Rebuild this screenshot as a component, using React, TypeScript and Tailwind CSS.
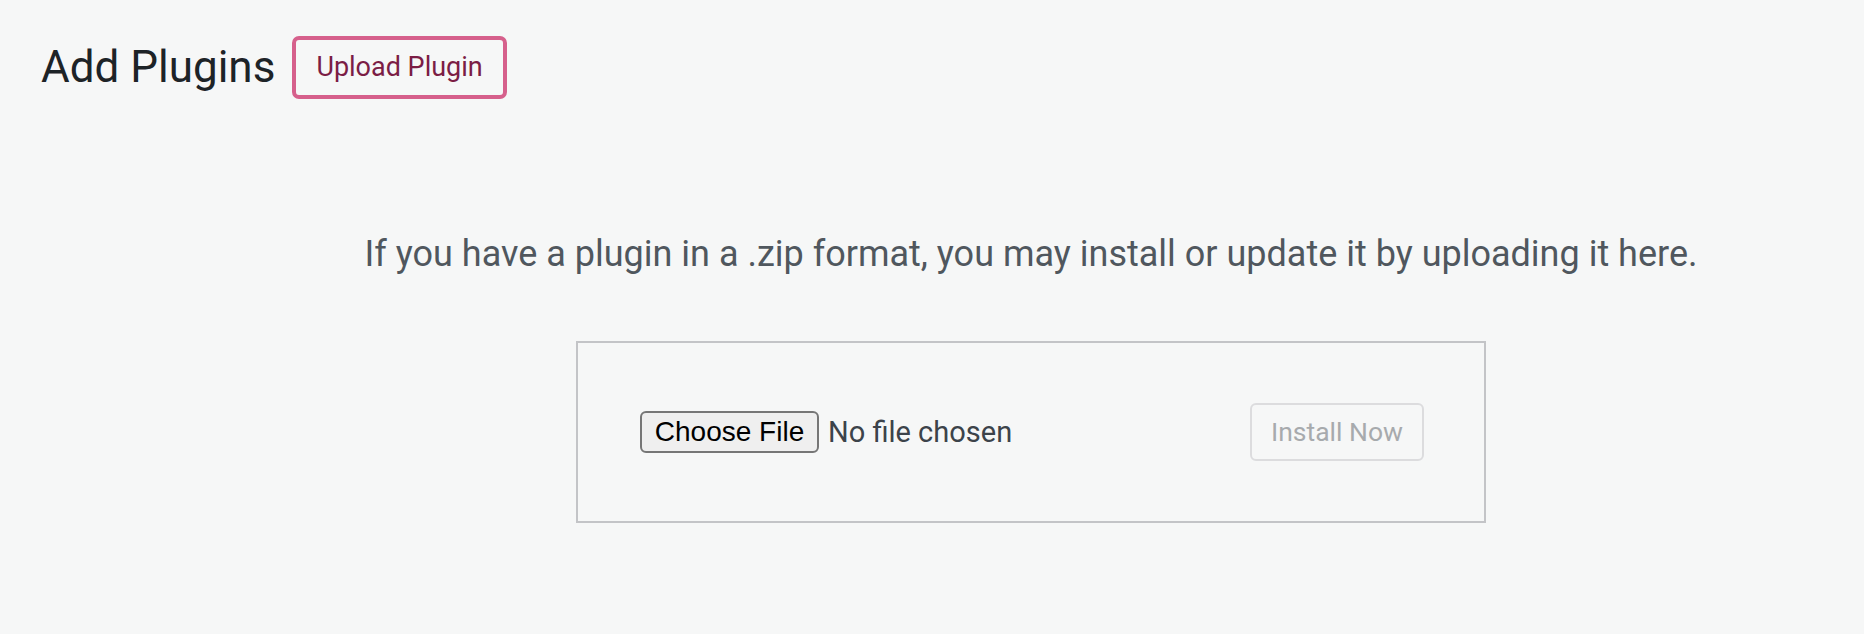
import React from "react";

export default function App() {
  return (
    <div
      className="w-full h-[634px] bg-[#f6f7f7] overflow-hidden"
      style={{ fontFamily: "Roboto, 'Noto Sans', sans-serif" }}
    >
      <div className="flex items-center pt-[36px] pl-[41px]">
        <h1 className="text-[44px] leading-[63px] text-[#1d2327] font-normal">
          Add Plugins
        </h1>
        <button className="ml-[17px] h-[63px] px-[20px] border-[4px] border-[#d6608c] rounded-[7px] text-[27px] leading-none text-[#7b1d45] bg-transparent">
          Upload Plugin
        </button>
      </div>

      <div className="flex flex-col items-center pl-[198px]">
        <p className="mt-[137px] text-[36px] leading-[36px] text-[#50575e] whitespace-nowrap">
          If you have a plugin in a .zip format, you may install or update it by uploading it here.
        </p>

        <div className="mt-[69px] w-[910px] h-[182px] border-2 border-[#c3c4c7] flex items-center justify-between pl-[62px] pr-[60px]">
          <div className="flex items-center">
            <span
              className="flex items-center justify-center w-[179px] h-[42px] border-2 border-[#767676] rounded-[6px] bg-[#efefef] text-[28px] text-black leading-none"
              style={{ fontFamily: "'Liberation Sans', Arial, sans-serif" }}
            >
              Choose File
            </span>
            <span className="ml-[9px] text-[29px] leading-none text-[#3c434a]">
              No file chosen
            </span>
          </div>
          <button className="w-[174px] h-[58px] border-2 border-[#dcdcde] rounded-[6px] text-[26.5px] leading-none text-[#a7aaad] bg-transparent">
            Install Now
          </button>
        </div>
      </div>
    </div>
  );
}
